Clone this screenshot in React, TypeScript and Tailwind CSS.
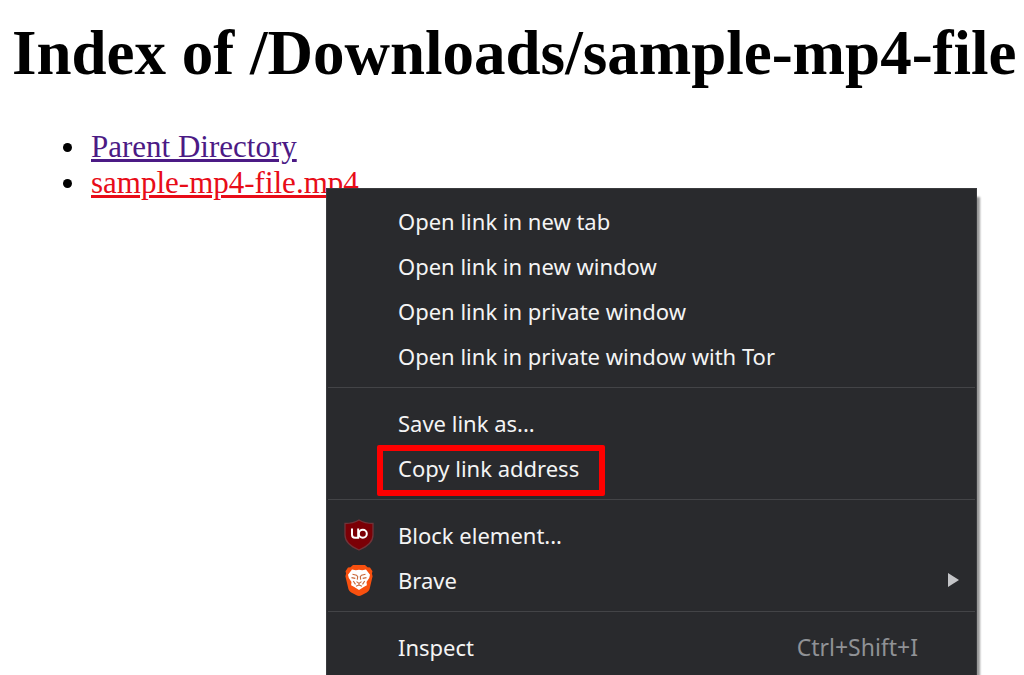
import type { ReactNode } from "react";

function UblockIcon() {
  return (
    <svg viewBox="0 0 30 32" className="h-8 w-[30px]" aria-hidden="true">
      <path
        d="M15 1C11 3.500 6 4.500 1 4.500V16c0 7 5.500 11.500 14 15 8.500-3.500 14-8 14-15V4.500C24 4.500 19 3.500 15 1Z"
        fill="#7b0006"
        stroke="#70343a"
        strokeWidth="1.300"
      />
      <path d="M8 9.500v6.300a3 3 0 0 0 3 3h3.200V9.500" fill="none" stroke="#fff" strokeWidth="2" />
      <circle cx="18.800" cy="14.800" r="4" fill="none" stroke="#fff" strokeWidth="2" />
    </svg>
  );
}

function BraveIcon() {
  return (
    <svg viewBox="0 0 30 32" className="h-8 w-[30px]" aria-hidden="true">
      <path
        d="M9 1h12l2.500 2.200 2.500.4 2.500 3.600-.6 2.200.7 2.800-3 12.800c-.5 1.600-1.500 2.600-2.800 3.400l-5.300 2.900c-1.600.8-3.400.8-5 0l-5.300-2.900c-1.300-.8-2.300-1.800-2.800-3.400l-3-12.800.7-2.800-.6-2.200L4 3.600l2.500-.4Z"
        fill="#f8500f"
      />
      <path
        d="m8 5.600 3.800.6L15 5.800l3.200.4 3.800-.6 4 5.200-.8 3.200-2.700 4 .4 3.200-3.200 1.800L15 26l-4.700-3-3.200-1.800.4-3.200-2.700-4L4 10.800Z"
        fill="#fff"
      />
      <path
        d="m8.500 10.300 4 .9 1.200 1.400-.4 3M21.500 10.300l-4 .9-1.200 1.400.4 3M7.500 13.600l3.800.8M22.500 13.600l-3.800.8M9.300 17l2.200 3.400M20.700 17l-2.200 3.400M12.500 17.600 15 19.400l2.500-1.800M15 19.400v1.600l-3 1.200M15 21l3 1.200"
        fill="none"
        stroke="#c9683a"
        strokeWidth="1.100"
      />
    </svg>
  );
}

type ItemProps = {
  label: string;
  icon?: ReactNode;
  shortcut?: string;
  submenu?: boolean;
  highlighted?: boolean;
};

function MenuItem({ label, icon, shortcut, submenu, highlighted }: ItemProps) {
  return (
    <button
      type="button"
      role="menuitem"
      aria-haspopup={submenu ? "menu" : undefined}
      className="relative flex h-[45px] w-full items-center pr-4 pl-[17px] text-left whitespace-nowrap hover:bg-[#3b3c3f]"
    >
      <span className="flex w-[54px] shrink-0">{icon}</span>
      <span className="grow">{label}</span>
      {shortcut && <span className="pr-[42px] text-[23px] text-[#909296]">{shortcut}</span>}
      {submenu && (
        <svg viewBox="0 0 12 16" className="h-4 w-3" aria-hidden="true">
          <path d="M0 1v14l11-7Z" fill="#c4c5c8" />
        </svg>
      )}
      {highlighted && (
        <span className="absolute top-0 left-[50px] h-[51px] w-[228px] rounded-xs border-6 border-[#fe0000]" />
      )}
    </button>
  );
}

function Separator() {
  return <div role="separator" className="mx-px mt-[9px] mb-3 h-px bg-[#434447]" />;
}

const listItem =
  "flex items-center before:mr-[19px] before:size-[9px] before:rounded-full before:bg-black before:content-['']";

export default function App() {
  return (
    <main className="relative h-screen overflow-hidden bg-white font-['Liberation_Serif',serif] text-black">
      <h1 className="px-3 pt-4 text-[63px] leading-[74px] font-bold whitespace-nowrap">
        Index of /Downloads/sample-mp4-file
      </h1>
      <ul className="mt-[39px] pl-[63px] text-[31px] leading-9">
        <li className={listItem}>
          <a href="#parent" className="text-[#4b1a85] underline">
            Parent Directory
          </a>
        </li>
        <li className={listItem}>
          <a href="#file" className="text-[#e80c18] underline">
            sample-mp4-file.mp4
          </a>
        </li>
      </ul>
      <div
        role="menu"
        className="absolute top-[188px] left-[326px] w-[651px] border border-[#3a3b3e] bg-[#292a2d] py-[9px] font-['Noto_Sans',sans-serif] text-[22px] leading-[30px] text-[#f4f4f4] shadow-[4px_8px_2px_-1px_#00000066]"
      >
        <MenuItem label="Open link in new tab" />
        <MenuItem label="Open link in new window" />
        <MenuItem label="Open link in private window" />
        <MenuItem label="Open link in private window with Tor" />
        <Separator />
        <MenuItem label="Save link as..." />
        <MenuItem label="Copy link address" highlighted />
        <Separator />
        <MenuItem label="Block element..." icon={<UblockIcon />} />
        <MenuItem label="Brave" icon={<BraveIcon />} submenu />
        <Separator />
        <MenuItem label="Inspect" shortcut="Ctrl+Shift+I" />
      </div>
    </main>
  );
}
